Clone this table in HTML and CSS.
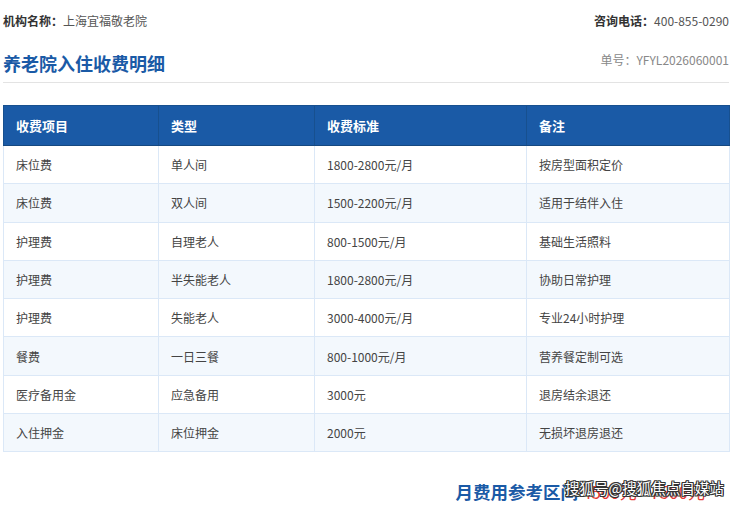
FILE: index.html
```html
<!DOCTYPE html>
<html lang="zh">
<head>
<meta charset="utf-8">
<link rel="stylesheet" href="styles.css">
</head>
<body>
<div class="page">
  <div class="top">
    <div><span class="lbl">机构名称：</span><span class="val">上海宜福敬老院</span></div>
    <div><span class="lbl">咨询电话：</span><span class="val">400-855-0290</span></div>
  </div>
  <div class="head">
    <h1 class="title">养老院入住收费明细</h1>
    <div class="no">单号：YFYL2026060001</div>
  </div>
  <table class="fees">
    <colgroup><col class="c1"><col class="c2"><col class="c3"><col class="c4"></colgroup>
    <thead>
      <tr><th>收费项目</th><th>类型</th><th>收费标准</th><th>备注</th></tr>
    </thead>
    <tbody>
      <tr><td>床位费</td><td>单人间</td><td>1800-2800元/月</td><td>按房型面积定价</td></tr>
      <tr><td>床位费</td><td>双人间</td><td>1500-2200元/月</td><td>适用于结伴入住</td></tr>
      <tr><td>护理费</td><td>自理老人</td><td>800-1500元/月</td><td>基础生活照料</td></tr>
      <tr><td>护理费</td><td>半失能老人</td><td>1800-2800元/月</td><td>协助日常护理</td></tr>
      <tr><td>护理费</td><td>失能老人</td><td>3000-4000元/月</td><td>专业24小时护理</td></tr>
      <tr><td>餐费</td><td>一日三餐</td><td>800-1000元/月</td><td>营养餐定制可选</td></tr>
      <tr><td>医疗备用金</td><td>应急备用</td><td>3000元</td><td>退房结余退还</td></tr>
      <tr><td>入住押金</td><td>床位押金</td><td>2000元</td><td>无损坏退房退还</td></tr>
    </tbody>
  </table>
  <div class="total">
    <span class="total-lbl">月费用参考区间</span><span class="total-val">4500元 - 7500元</span>
    <span class="mark">搜狐号@搜狐焦点自媒站</span>
  </div>
</div>
</body>
</html>
```
FILE: styles.css
```css
* { box-sizing: border-box; }
html, body { margin: 0; padding: 0; background: #fff; }
body {
  font-family: "Microsoft YaHei", "Noto Sans CJK SC", "Open Sans", sans-serif;
  color: #444;
  width: 740px;
  height: 505px;
  overflow: hidden;
}
.page {
  width: 726px;
  margin-left: 3px;
}
.top {
  display: flex;
  justify-content: space-between;
  align-items: center;
  padding-top: 11px;
  height: 30px;
  font-size: 12px;
  line-height: 18px;
}
.lbl { font-weight: bold; color: #333; }
.val { color: #555; }
.head {
  display: flex;
  justify-content: space-between;
  align-items: center;
  margin-top: 19px;
  padding-bottom: 6px;
  border-bottom: 1px solid #e3e3e3;
  height: 34px;
}
.title {
  margin: 0;
  font-size: 18px;
  line-height: 26px;
  font-weight: bold;
  color: #1a5aa6;
}
.no {
  font-size: 12px;
  color: #888;
  position: relative;
  top: -3px;
}
.fees {
  width: 726px;
  margin-top: 22px;
  border-collapse: collapse;
  table-layout: fixed;
  font-size: 12px;
}
.c1 { width: 155px; }
.c2 { width: 156px; }
.c3 { width: 212px; }
.c4 { width: 203px; }
.fees th {
  background: #1a5aa6;
  color: #fff;
  font-weight: bold;
  font-size: 13px;
  text-align: left;
  height: 40px;
  padding: 0 12px;
  border: 1px solid #17508f;
  border-bottom: 1px solid #154880;
}
.fees td {
  height: 38.3px;
  padding: 0 12px;
  color: #444;
  border: 1px solid #dbe8f7;
}
.fees tbody tr:nth-child(even) td { background: #f3f8fd; }
.total {
  position: relative;
  text-align: right;
  white-space: nowrap;
  padding-right: 24px;
  margin-top: 27px;
  line-height: 26px;
}
.total-lbl {
  font-size: 17.5px;
  font-weight: bold;
  color: #1a5aa6;
}
.total-val {
  font-size: 17px;
  color: #e53935;
  margin-left: 4px;
}
.mark {
  position: absolute;
  left: 562px;
  top: 0px;
  font-size: 14.5px;
  line-height: 18px;
  color: #fff;
  white-space: nowrap;
  text-shadow: 1px 1px 0 #333, -1px -1px 0 #333, 1px -1px 0 #333, -1px 1px 0 #333, 0 1px 0 #333, 0 -1px 0 #333, 1px 0 0 #333, -1px 0 0 #333;
}
```
